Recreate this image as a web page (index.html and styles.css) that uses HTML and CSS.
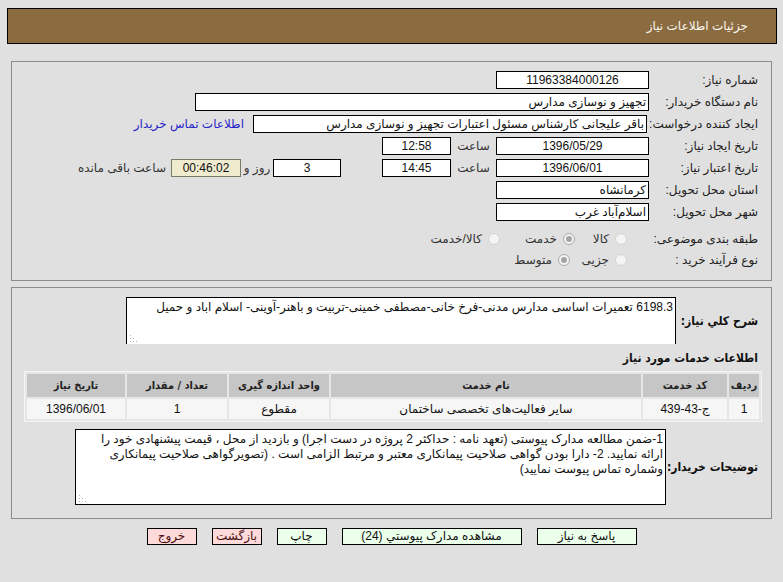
FILE: index.html
```html
<!DOCTYPE html>
<html lang="fa" dir="rtl">
<head>
<meta charset="utf-8">
<title>جزئیات اطلاعات نیاز</title>
<link rel="stylesheet" href="styles.css">
</head>
<body>
<div class="title-bar">جزئیات اطلاعات نیاز</div>

<section class="panel panel-main">
  <div class="row">
    <div class="lbl">شماره نیاز:</div>
    <div class="box box-mid center num">11963384000126</div>
  </div>
  <div class="row">
    <div class="lbl">نام دستگاه خریدار:</div>
    <div class="box box-wide">تجهیز و نوسازی مدارس</div>
  </div>
  <div class="row">
    <div class="lbl lbl-auto">ایجاد کننده درخواست:</div>
    <div class="box box-creator">باقر علیجانی کارشناس مسئول اعتبارات تجهیز و نوسازی مدارس</div>
    <a class="contact-link" href="#">اطلاعات تماس خریدار</a>
  </div>
  <div class="row">
    <div class="lbl">تاریخ ایجاد نیاز:</div>
    <div class="box box-mid center num">1396/05/29</div>
    <div class="unit">ساعت</div>
    <div class="box box-time center num">12:58</div>
  </div>
  <div class="row">
    <div class="lbl">تاریخ اعتبار نیاز:</div>
    <div class="box box-mid center num">1396/06/01</div>
    <div class="unit">ساعت</div>
    <div class="box box-time center num">14:45</div>
    <div class="box box-days center num">3</div>
    <div class="unit unit-days">روز و</div>
    <div class="box box-timer center num">00:46:02</div>
    <div class="remain">ساعت باقی مانده</div>
  </div>
  <div class="row">
    <div class="lbl">استان محل تحویل:</div>
    <div class="box box-mid">کرمانشاه</div>
  </div>
  <div class="row">
    <div class="lbl">شهر محل تحویل:</div>
    <div class="box box-mid">اسلام‌آباد غرب</div>
  </div>
  <div class="row row-radio row-radio-first">
    <div class="lbl">طبقه بندی موضوعی:</div>
    <div class="opts">
      <span class="opt opt-a"><span class="radio"></span>کالا</span>
      <span class="opt opt-b"><span class="radio on"></span>خدمت</span>
      <span class="opt"><span class="radio"></span>کالا/خدمت</span>
    </div>
  </div>
  <div class="row row-radio">
    <div class="lbl">نوع فرآیند خرید :</div>
    <div class="opts">
      <span class="opt opt-c"><span class="radio"></span>جزیی</span>
      <span class="opt"><span class="radio on"></span>متوسط</span>
    </div>
  </div>
</section>

<section class="panel panel-detail">
  <div class="row-area">
    <div class="lbl-bold lbl-desc">شرح کلي نياز:</div>
    <div class="area area-desc">6198.3 تعمیرات اساسی مدارس مدنی-فرخ خانی-مصطفی خمینی-تربیت و باهنر-آوینی- اسلام اباد و حمیل<span class="grip"><svg width="7" height="7" viewBox="0 0 7 7"><g fill="#b4b4b4"><rect x="0" y="0" width="1" height="1"/><rect x="0" y="3" width="1" height="1"/><rect x="3" y="3" width="1" height="1"/><rect x="0" y="6" width="1" height="1"/><rect x="3" y="6" width="1" height="1"/><rect x="6" y="6" width="1" height="1"/></g></svg></span></div>
  </div>

  <div class="section-title">اطلاعات خدمات مورد نیاز</div>

  <table class="items">
    <colgroup>
      <col class="c-row"><col class="c-code"><col class="c-name"><col class="c-unit"><col class="c-qty"><col class="c-date">
    </colgroup>
    <thead>
      <tr>
        <th>ردیف</th>
        <th>کد خدمت</th>
        <th>نام خدمت</th>
        <th>واحد اندازه گیری</th>
        <th>تعداد / مقدار</th>
        <th>تاریخ نیاز</th>
      </tr>
    </thead>
    <tbody>
      <tr>
        <td>1</td>
        <td>ج-43-439</td>
        <td>سایر فعالیت‌های تخصصی ساختمان</td>
        <td>مقطوع</td>
        <td>1</td>
        <td>1396/06/01</td>
      </tr>
    </tbody>
  </table>

  <div class="row-area row-notes">
    <div class="lbl-bold lbl-notes">توضیحات خریدار:</div>
    <div class="area area-notes">1-ضمن مطالعه مدارک پیوستی (تعهد نامه : حداکثر 2 پروژه در دست اجرا) و بازدید از محل ، قیمت پیشنهادی خود را ارائه نمایید. 2- دارا بودن گواهی صلاحیت پیمانکاری معتبر و مرتبط الزامی است . (تصویرگواهی صلاحیت پیمانکاری وشماره تماس پیوست نمایید)<span class="grip"><svg width="7" height="7" viewBox="0 0 7 7"><g fill="#b4b4b4"><rect x="0" y="0" width="1" height="1"/><rect x="0" y="3" width="1" height="1"/><rect x="3" y="3" width="1" height="1"/><rect x="0" y="6" width="1" height="1"/><rect x="3" y="6" width="1" height="1"/><rect x="6" y="6" width="1" height="1"/></g></svg></span></div>
  </div>
</section>

<div class="actions">
  <button class="btn btn-ok btn-reply" type="button">پاسخ به نیاز</button>
  <button class="btn btn-ok btn-docs" type="button">مشاهده مدارک پیوستي (24)</button>
  <button class="btn btn-ok btn-small" type="button">چاپ</button>
  <button class="btn btn-back btn-small" type="button">بازگشت</button>
  <button class="btn btn-back btn-small" type="button">خروج</button>
</div>
</body>
</html>
```

FILE: styles.css
```css
* {
  box-sizing: border-box;
}

html,
body {
  margin: 0;
  padding: 0;
}

body {
  width: 783px;
  height: 582px;
  overflow: hidden;
  background: #e0e0e0;
  font-family: "Liberation Sans", "DejaVu Sans", sans-serif;
  font-size: 12px;
  color: #1a1a1a;
}

.title-bar {
  margin: 8px 6px 0 7px;
  height: 36px;
  padding-right: 28px;
  background: #8b6b40;
  border: 1px solid #000;
  color: #fbf7ee;
  font-size: 12px;
  line-height: 34px;
}

.panel {
  margin: 17px 11px 0 11px;
  border: 1px solid #8c8c8c;
}

.panel-main {
  height: 220px;
  padding: 7px 13px 0 0;
}

.row {
  display: flex;
  align-items: center;
  height: 22px;
}

.lbl {
  flex: none;
  width: 109px;
  white-space: nowrap;
  color: #222;
}

.lbl-auto {
  width: auto;
  min-width: 109px;
  margin-left: 2px;
}

.box {
  flex: none;
  height: 18px;
  padding: 0 2px;
  border: 1px solid #000;
  background: #fff;
  line-height: 16px;
  white-space: nowrap;
  overflow: hidden;
  color: #111;
}

.center {
  text-align: center;
}

.box-mid {
  width: 153px;
}

.box-wide {
  width: 454px;
}

.box-creator {
  width: 394px;
}

.contact-link {
  margin-right: 9px;
  color: #2626c8;
  text-decoration: none;
  white-space: nowrap;
}

.unit {
  flex: none;
  width: 45px;
  text-align: center;
  color: #333;
}

.box-time {
  width: 69px;
}

.box-days {
  width: 68px;
  margin-right: 41px;
}

.unit-days {
  width: 32px;
}

.box-timer {
  width: 70px;
  background: #efebcf;
  border-color: #7a7a6a;
}

.remain {
  margin-right: 5px;
  white-space: nowrap;
  color: #333;
}

.row-radio {
  height: 21px;
}

.row-radio-first {
  margin-top: 5px;
}

.opts {
  display: flex;
  align-items: center;
  padding-right: 22px;
  color: #333;
}

.opt {
  display: flex;
  align-items: center;
  white-space: nowrap;
}

.opt-a {
  width: 52px;
}

.opt-b {
  width: 75px;
}

.opt-c {
  width: 57px;
}

.radio {
  position: relative;
  flex: none;
  width: 12px;
  height: 12px;
  margin-left: 6px;
  border: 1px solid #d2d2d2;
  border-radius: 50%;
  background: #f4f4f4;
}

.radio.on {
  border-color: #a9a9a9;
}

.radio.on::after {
  content: "";
  position: absolute;
  left: 2px;
  top: 2px;
  width: 6px;
  height: 6px;
  border-radius: 50%;
  background: #a5a5a5;
}

.panel-detail {
  height: 232px;
  margin-top: 6px;
  padding: 9px 13px 0 0;
}

.row-area {
  display: flex;
  align-items: center;
}

.lbl-bold {
  flex: none;
  font-family: "DejaVu Sans Condensed", "DejaVu Sans", sans-serif;
  font-weight: bold;
  font-size: 12px;
  white-space: nowrap;
  color: #111;
}

.lbl-desc {
  width: 82px;
}

.lbl-notes {
  width: 92px;
}

.area {
  position: relative;
  flex: none;
  padding: 2px 2px 0 2px;
  border: 1px solid #000;
  background: #fff;
  line-height: 15px;
  color: #111;
  overflow: hidden;
}

.area-desc {
  width: 550px;
  height: 47px;
  border-bottom: none;
}

.area-notes {
  width: 591px;
  height: 76px;
}

.grip {
  position: absolute;
  left: 3px;
  bottom: 2px;
  width: 7px;
  height: 7px;
  line-height: 0;
}

.section-title {
  margin-top: 6px;
  height: 16px;
  line-height: 16px;
  font-family: "DejaVu Sans Condensed", "DejaVu Sans", sans-serif;
  font-weight: bold;
  color: #111;
}

.items {
  width: 738px;
  margin: 5px -4px 0 0;
  table-layout: fixed;
  border-collapse: separate;
  border-spacing: 2px;
  border: 1px solid #f4f4f4;
  background: #e6e6e6;
}

.c-row { width: 30px; }
.c-code { width: 84px; }
.c-name { width: 310px; }
.c-unit { width: 100px; }
.c-qty { width: 100px; }
.c-date { width: 98px; }

.items th {
  height: 23px;
  padding: 0;
  background: #c6c6c6;
  font-family: "DejaVu Sans Condensed", "DejaVu Sans", sans-serif;
  font-size: 11px;
  font-weight: bold;
  color: #222;
  text-align: center;
}

.items td {
  height: 20px;
  padding: 0;
  background: #f6f6f6;
  text-align: center;
  color: #111;
}

.row-notes {
  margin-top: 7px;
}

.actions {
  display: flex;
  justify-content: center;
  gap: 15px;
  margin-top: 9px;
}

.btn {
  height: 17px;
  padding: 0;
  border: 1px solid #000;
  font-family: "Liberation Sans", "DejaVu Sans", sans-serif;
  font-size: 12px;
  line-height: 15px;
  color: #111;
}

.btn-ok {
  background: #ebffeb;
}

.btn-back {
  background: #ffdada;
  color: #4a1010;
}

.btn-reply {
  width: 100px;
}

.btn-docs {
  width: 180px;
}

.btn-small {
  width: 50px;
}
```
